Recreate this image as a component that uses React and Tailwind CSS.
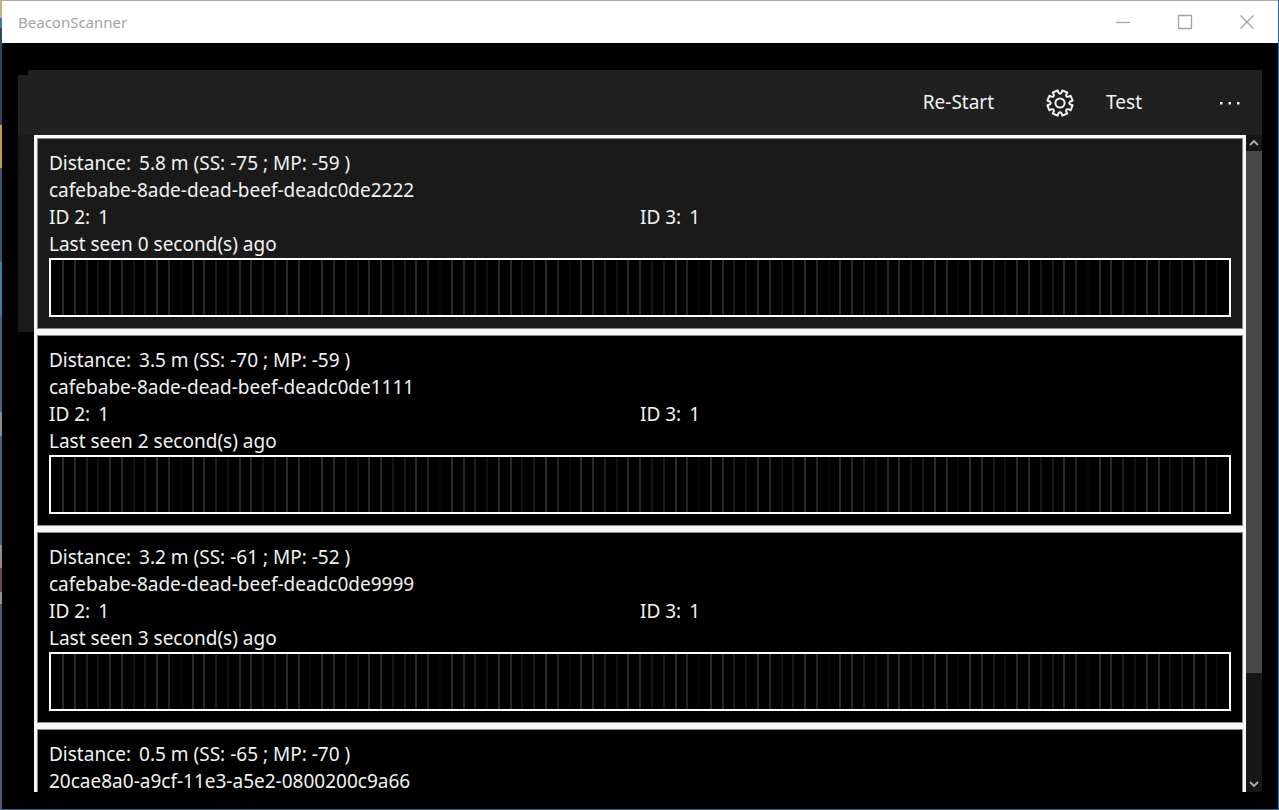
const shades = ['#2a2a2a', '#282828', '#1c1c1c', '#101010', '#282828', '#282828', '#141414', '#1a1a1a', '#2a2a2a', '#242424', '#0a0a0a']

const beacons = [
  { distance: '5.8', ss: -75, mp: -59, id: 'cafebabe-8ade-dead-beef-deadc0de2222', details: { id2: 1, id3: 1, seen: 0 }, hovered: true },
  { distance: '3.5', ss: -70, mp: -59, id: 'cafebabe-8ade-dead-beef-deadc0de1111', details: { id2: 1, id3: 1, seen: 2 } },
  { distance: '3.2', ss: -61, mp: -52, id: 'cafebabe-8ade-dead-beef-deadc0de9999', details: { id2: 1, id3: 1, seen: 3 } },
  { distance: '0.5', ss: -65, mp: -70, id: '20cae8a0-a9cf-11e3-a5e2-0800200c9a66' },
]

// Teeth are short rounded bumps on the ring, with a curved notch between them
function gearPath(teeth, outer, inner) {
  const pts = []
  const step = (Math.PI * 2) / teeth
  for (let i = 0; i < teeth; i++) {
    const mid = i * step - Math.PI / 2 + step / 2
    const at = (a, r) => `${(Math.cos(mid + a * step) * r).toFixed(2)} ${(Math.sin(mid + a * step) * r).toFixed(2)}`
    pts.push(`${i === 0 ? 'M' : 'L'}${at(-0.27, outer)}`)
    pts.push(`L${at(0.27, outer)}`)
    pts.push(`L${at(0.31, inner + 0.8)}`)
    pts.push(`Q${at(0.5, inner - 1.4)} ${at(0.69, inner + 0.8)}`)
  }
  return pts.join(' ') + 'Z'
}

function GearIcon() {
  return (
    <svg className="size-7" viewBox="-14 -14 28 28" fill="none" stroke="currentColor" strokeWidth="2" strokeLinejoin="round" aria-hidden="true">
      <path d={gearPath(8, 12.8, 9.6)} />
      <circle r="4.6" />
    </svg>
  )
}

function TitleBar() {
  return (
    <header className="flex h-[43px] shrink-0 items-center border-t border-[#a8a8a8] bg-white pl-4 text-[#a3a3a3]">
      <h1 className="flex-1 text-[15px]">BeaconScanner</h1>
      <button className="flex h-full w-[62px] items-center justify-center" aria-label="Minimize">
        <svg className="size-4" viewBox="0 0 16 16" stroke="currentColor" strokeWidth="1.3"><path d="M1 8.5h14" /></svg>
      </button>
      <button className="flex h-full w-[62px] items-center justify-center" aria-label="Maximize">
        <svg className="size-4" viewBox="0 0 16 16" fill="none" stroke="currentColor" strokeWidth="1.3"><path d="M1.5 1.5h13v13h-13z" /></svg>
      </button>
      <button className="flex h-full w-[62px] items-center justify-center" aria-label="Close">
        <svg className="size-4" viewBox="0 0 16 16" stroke="currentColor" strokeWidth="1.3"><path d="M1.5 1.5l13 13M14.5 1.5l-13 13" /></svg>
      </button>
    </header>
  )
}

function CommandBar() {
  return (
    <div className="relative flex h-[65px] shrink-0 items-center justify-end bg-[#202020] text-[19px]">
      <div className="absolute left-0 top-0 h-[5px] w-[10px] bg-black" />
      <button className="mr-[52px]">Re-Start</button>
      <button className="mr-8" aria-label="Settings"><GearIcon /></button>
      <button className="mr-[78px]">Test</button>
      <button className="mr-[22px]" aria-label="More">
        <svg className="h-1 w-5" viewBox="0 0 20 4" fill="currentColor"><path d="M0 1h2.5v2.5h-2.5zM8.5 1h2.5v2.5h-2.5zM17 1h2.5v2.5h-2.5z" /></svg>
      </button>
    </div>
  )
}

function SignalChart() {
  return (
    <div className="h-[59px] border-2 border-white bg-black">
      <svg className="block h-full w-full" viewBox="0 0 1178 55" preserveAspectRatio="none" aria-hidden="true">
        {Array.from({ length: 99 }, (_, i) => (
          <rect key={i} x={Math.round(11 + i * 11.78)} y="0" width="2" height="55" fill={shades[i % shades.length]} />
        ))}
      </svg>
    </div>
  )
}

function BeaconDetails({ details }) {
  return (
    <>
      <div className="grid grid-cols-2">
        <p className="flex gap-2"><span>ID 2:</span><span>{details.id2}</span></p>
        <p className="flex gap-2"><span>ID 3:</span><span>{details.id3}</span></p>
      </div>
      <p>Last seen {details.seen} second(s) ago</p>
      <SignalChart />
    </>
  )
}

function BeaconCard({ beacon }) {
  return (
    <li className={beacon.hovered ? 'bg-[#1a1a1a] pl-4' : 'pl-4'}>
      <div className="border-[3px] border-[#f8f8f8]">
        <div className="min-h-[191px] border border-[#8a8a8a] p-[11px] text-[19px] leading-[27px]">
          <p className="flex gap-2"><span>Distance:</span><span>{beacon.distance} m (SS: {beacon.ss} ; MP: {beacon.mp} )</span></p>
          <p>{beacon.id}</p>
          {beacon.details && <BeaconDetails details={beacon.details} />}
        </div>
      </div>
    </li>
  )
}

function ScrollBar() {
  return (
    <div className="flex w-4 shrink-0 flex-col bg-[#171717] text-[#b0b0b0]">
      <button className="flex h-4 items-center justify-center" aria-label="Scroll up">
        <svg className="size-3" viewBox="0 0 12 12" fill="none" stroke="currentColor" strokeWidth="1.8"><path d="M2 8l4-4 4 4" /></svg>
      </button>
      <div className="flex-1">
        <div className="h-[83.5%] bg-[#484848]" />
      </div>
      <button className="flex h-4 items-center justify-center" aria-label="Scroll down">
        <svg className="size-3" viewBox="0 0 12 12" fill="none" stroke="currentColor" strokeWidth="1.8"><path d="M2 4l4 4 4-4" /></svg>
      </button>
    </div>
  )
}

export default function App() {
  return (
    <div className="flex h-screen bg-black font-['Noto_Sans',sans-serif] text-[#f2f2f2]">
      {/* Sliver of the desktop behind the window */}
      <div className="w-0.5 shrink-0 bg-[linear-gradient(#c9b080_0_18px,#3f78b8_18px_28px,#33465c_28px_125px,#c39a4c_125px_168px,#3e5468_168px_262px,#3a80aa_262px_316px,#4a6280_316px_412px,#8c8c94_412px_436px,#4a6280_436px_545px,#948c90_545px_568px,#6c4a54_568px_592px,#989098_592px_604px,#4a5c74_604px)]" />
      <div className="flex min-w-0 flex-1 flex-col border-b border-[#3f5f85]">
        <TitleBar />
        <main className="flex min-h-0 flex-1 flex-col px-4 pt-[27px] pb-[17px]">
          <CommandBar />
          <div className="flex min-h-0 flex-1">
            <ul className="flex-1 overflow-hidden">
              {beacons.map((beacon) => (
                <BeaconCard key={beacon.id} beacon={beacon} />
              ))}
            </ul>
            <ScrollBar />
          </div>
        </main>
      </div>
      <div className="w-px shrink-0 bg-[#2f6fa5]" />
    </div>
  )
}
